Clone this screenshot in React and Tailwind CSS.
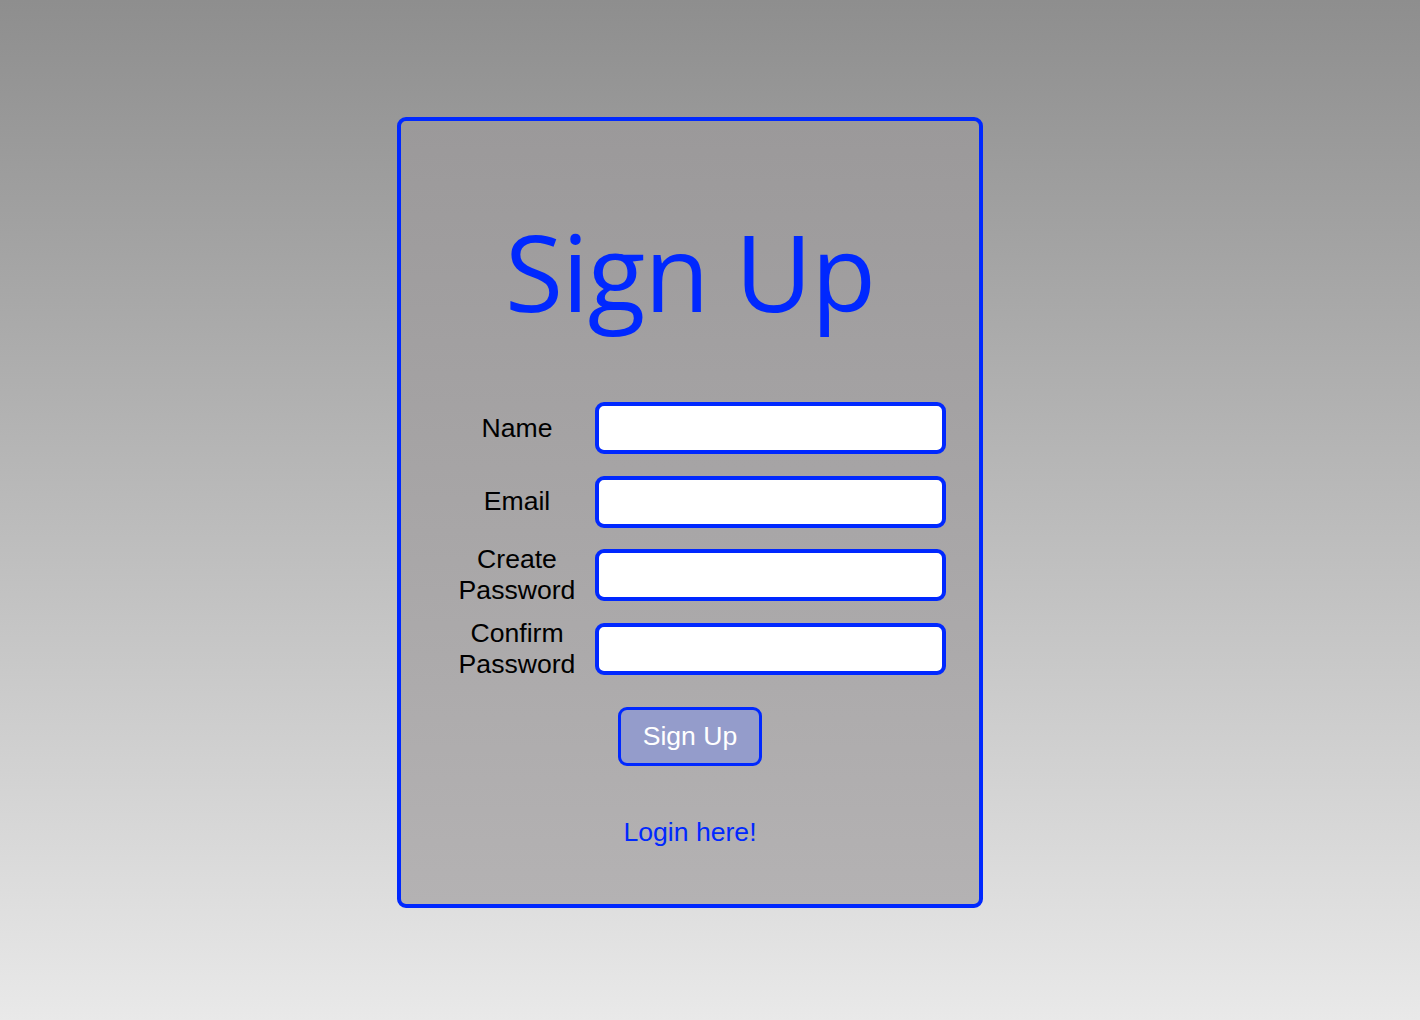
export default function App() {
  const fields = [
    { id: "name", label: "Name", type: "text" },
    { id: "email", label: "Email", type: "email" },
    { id: "password", label: "Create Password", type: "password" },
    { id: "confirm", label: "Confirm Password", type: "password" },
  ];

  return (
    <main className="min-h-screen h-[1020px] bg-gradient-to-b from-[#8e8e8e] to-[#e9e9e9] flex justify-center pt-[117px] pr-[40px] font-['Liberation_Sans',Arial,sans-serif]">
      <div className="w-[586px] h-[791px] border-4 border-[#0028ff] rounded-[9px] bg-gradient-to-b from-[#9b999a] to-[#b4b2b3] flex flex-col">
        <h1 className="text-center text-[#0028ff] text-[106px] leading-none font-normal font-['Open_Sans',sans-serif] mt-[97px] tracking-[-1px]">
          Sign Up
        </h1>

        <form className="mt-[78px] ml-[41px] flex flex-col gap-[21.5px]" onSubmit={(e) => e.preventDefault()}>
          {fields.map((f) => (
            <div key={f.id} className="flex items-center h-[52px]">
              <label
                htmlFor={f.id}
                className="w-[150px] text-center text-[26.6px] leading-[31px] text-black px-[10px]"
              >
                {f.label}
              </label>
              <input
                id={f.id}
                type={f.type}
                className="ml-[3px] w-[351px] h-[52px] bg-white border-4 border-[#0028ff] rounded-[9px] outline-none px-2 text-[20px]"
              />
            </div>
          ))}
        </form>

        <div className="flex justify-center mt-[32px]">
          <button className="w-[144px] h-[59px] bg-[#949ccb] border-[3px] border-[#0028ff] rounded-[9px] text-white text-[26.6px] leading-none">
            Sign Up
          </button>
        </div>

        <div className="flex justify-center mt-[51px]">
          <a href="#" className="text-[#0028ff] text-[26.6px] leading-[31px]">
            Login here!
          </a>
        </div>
      </div>
    </main>
  );
}
